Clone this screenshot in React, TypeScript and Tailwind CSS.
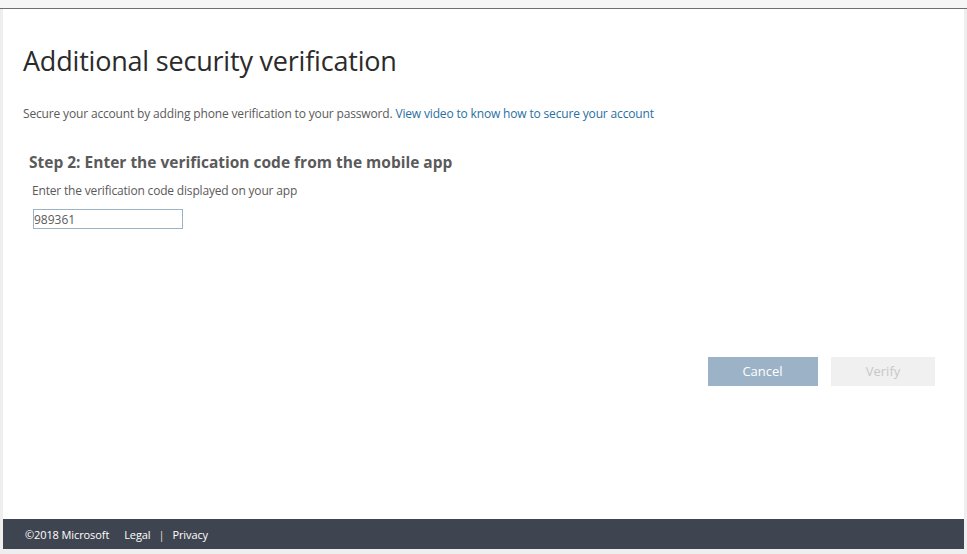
export default function App() {
  return (
    <div className="w-[967px] h-[554px] flex flex-col bg-[#eeeeee] font-['Open_Sans',sans-serif] overflow-hidden">
      <div className="h-[9px] shrink-0 bg-[#f6f6f6] border-b border-[#707070]" />
      <div className="flex-1 flex flex-col mx-[3px] mb-[5px] bg-white">
        <main className="flex-1 flex flex-col pl-5 pr-[29px]">
          <h1 className="mt-[33px] text-[27px] leading-[38px] font-normal text-[#2b2b2b] tracking-[-0.2px]">
            Additional security verification
          </h1>
          <p className="mt-[25px] text-[12px] leading-[18px] text-[#5a5a5a] tracking-[-0.16px]">
            Secure your account by adding phone verification to your password.{' '}
            <a href="#" className="text-[#2a6f9e]">View video to know how to secure your account</a>
          </p>
          <section className="mt-[28px] pl-[6px]">
            <h2 className="text-[15.5px] leading-[22px] font-bold text-[#5a5a5a]">
              Step 2: Enter the verification code from the mobile app
            </h2>
            <label className="block mt-[9px] pl-[3px] text-[12px] leading-[18px] text-[#5a5a5a] tracking-[-0.18px]">
              Enter the verification code displayed on your app
            </label>
            <input
              readOnly
              value="989361"
              className="block mt-[9px] ml-1 w-[150px] h-5 px-0 border border-[#9cb2c6] text-[12px] text-[#5a5a5a] outline-none"
            />
          </section>
          <div className="mt-[128px] flex justify-end gap-[13px]">
            <button className="w-[110px] h-[29px] pt-[1px] pr-[1px] bg-[#9cb3c7] text-white text-[13px]">Cancel</button>
            <button className="w-[104px] h-[29px] pt-[1px] bg-[#f0f0f0] text-[#c8c8c8] text-[13px]">Verify</button>
          </div>
        </main>
        <footer className="h-[30px] shrink-0 bg-[#3f4550] flex items-center pl-[22px] pt-[2px] text-[11px] text-white tracking-[-0.1px]">
          <span>©2018 Microsoft</span>
          <a href="#" className="ml-[15px]">Legal</a>
          <span className="mx-[8px] text-[#e8dcd0]">|</span>
          <a href="#">Privacy</a>
        </footer>
      </div>
    </div>
  );
}
